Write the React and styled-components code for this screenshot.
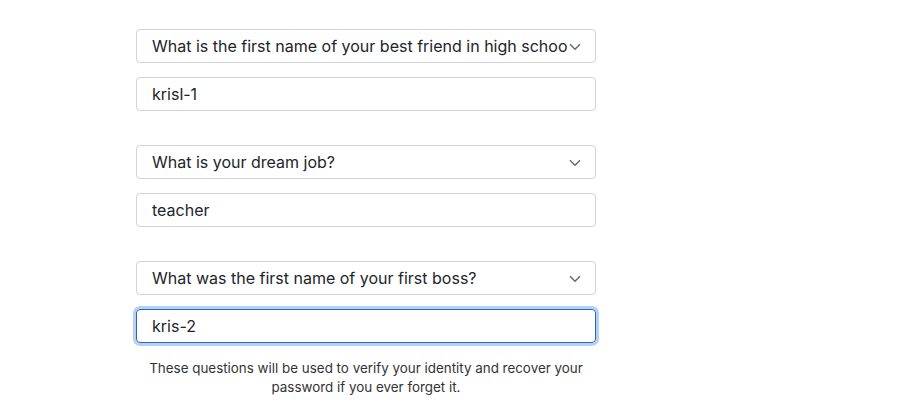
import React from "react";
import styled, { createGlobalStyle } from "styled-components";

const GlobalStyle = createGlobalStyle`
  body {
    margin: 0;
    background: #fff;
    font-family: Inter, "Liberation Sans", Arial, sans-serif;
    color: #212529;
  }
`;

const Wrapper = styled.div`
  width: 897px;
  height: 406px;
  padding: 29px 0 0 136px;
  box-sizing: border-box;
  overflow: hidden;
`;

const Form = styled.div`
  width: 460px;
  display: flex;
  flex-direction: column;
  gap: 34px;
`;

const Group = styled.div`
  display: flex;
  flex-direction: column;
  gap: 14px;
`;

const Field = styled.div`
  position: relative;
  height: 34px;
  box-sizing: border-box;
  border: 1px solid ${(p) => (p.$focused ? "#3163a6" : "#ced4da")};
  border-radius: 4px;
  box-shadow: ${(p) => (p.$focused ? "0 0 0 3px #b4d2f7" : "none")};
  display: flex;
  align-items: center;
  padding: 0 ${(p) => (p.$select ? "28px" : "15px")} 0 15px;
  font-size: 16px;
  color: #212529;
`;

const Value = styled.span`
  flex: 1;
  min-width: 0;
  white-space: nowrap;
  overflow: hidden;
`;

const Chevron = styled.svg`
  position: absolute;
  right: 14px;
  top: 13px;
`;

const Help = styled.p`
  margin: -18px 0 0;
  font-size: 13.4px;
  line-height: 19px;
  text-align: center;
  color: #333;
`;

const questions = [
  { q: "What is the first name of your best friend in high school?", a: "krisl-1" },
  { q: "What is your dream job?", a: "teacher" },
  { q: "What was the first name of your first boss?", a: "kris-2", focused: true },
];

function App() {
  return (
    <Wrapper>
      <GlobalStyle />
      <Form>
        {questions.map((item) => (
          <Group key={item.q}>
            <Field $select>
              <Value>{item.q}</Value>
              <Chevron width="12" height="8" viewBox="0 0 12 8">
                <path d="M1 1.2l5 5 5-5" fill="none" stroke="#6b6b6b" strokeWidth="1.5" />
              </Chevron>
            </Field>
            <Field $focused={item.focused}>
              <Value>{item.a}</Value>
            </Field>
          </Group>
        ))}
        <Help>
          These questions will be used to verify your identity and recover your
          <br />
          password if you ever forget it.
        </Help>
      </Form>
    </Wrapper>
  );
}

export default App;
